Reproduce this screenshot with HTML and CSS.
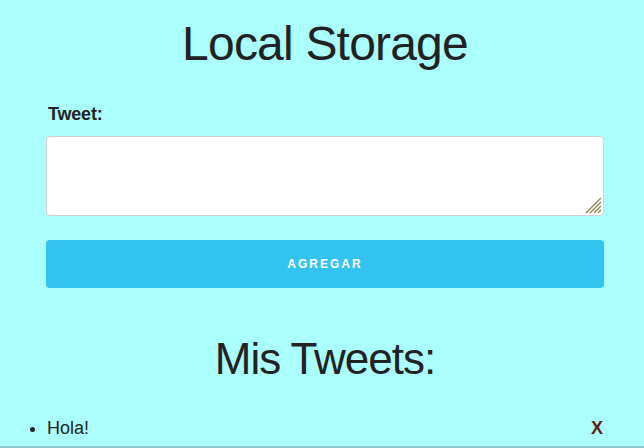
FILE: index.html
```html
<!DOCTYPE html>
<html lang="es">
<head>
<meta charset="utf-8">
<title>Local Storage</title>
<link rel="stylesheet" href="styles.css">
</head>
<body>
<div class="container">
  <h1 class="title">Local Storage</h1>
  <form class="form">
    <label class="label" for="tweet">Tweet:</label>
    <div class="field-wrap">
      <textarea id="tweet" class="field"></textarea>
      <svg class="grip" width="18" height="18" viewBox="0 0 18 18" aria-hidden="true">
        <path d="M2 17L17 2M6 17L17 6M10 17L17 10M14 17L17 14" stroke="#8c7e4c" stroke-width="1.2" fill="none"/>
      </svg>
    </div>
    <button type="button" class="button">Agregar</button>
  </form>
  <h2 class="subtitle">Mis Tweets:</h2>
  <ul class="list">
    <li class="item"><span class="item-text">Hola!</span><a class="remove">X</a></li>
  </ul>
</div>
<div class="rule"></div>
</body>
</html>
```

FILE: styles.css
```css
html, body {
  margin: 0;
  padding: 0;
  height: 100%;
}
body {
  background: #abfefe;
  color: #222;
  font-family: "Liberation Sans", Arial, sans-serif;
  overflow: hidden;
  display: flex;
  flex-direction: column;
}
.container {
  padding: 15px 40px 0 46px;
  display: flex;
  flex-direction: column;
  flex: 1;
}
.title {
  margin: 0;
  font-size: 48px;
  font-weight: 400;
  line-height: 1.2;
  letter-spacing: -0.8px;
  text-align: center;
}
.form {
  margin-top: 31px;
  display: flex;
  flex-direction: column;
}
.label {
  font-size: 18px;
  font-weight: 700;
  line-height: 1.2;
  letter-spacing: -0.2px;
  margin-left: 2px;
}
.field-wrap {
  position: relative;
  margin-top: 11px;
  display: flex;
}
.field {
  box-sizing: border-box;
  flex: 1;
  height: 80px;
  margin: 0;
  border: 1px solid #d1d1d1;
  border-radius: 4px;
  background: #fff;
  padding: 6px 10px;
  font-family: inherit;
  font-size: 15px;
  resize: none;
}
.grip {
  position: absolute;
  right: 2px;
  bottom: 2px;
  pointer-events: none;
}
.button {
  margin-top: 24px;
  height: 48px;
  border: 0;
  border-radius: 4px;
  background: #33c3f0;
  color: #fff;
  font-family: inherit;
  font-size: 12px;
  font-weight: 700;
  letter-spacing: 2px;
  text-transform: uppercase;
}
.subtitle {
  margin: 45px 0 0;
  font-size: 44px;
  font-weight: 400;
  line-height: 1.2;
  letter-spacing: -1px;
  text-align: center;
}
.list {
  margin: 32px 0 0;
  padding-left: 1px;
  list-style: none;
}
.item {
  display: flex;
  justify-content: space-between;
  align-items: baseline;
  font-size: 18px;
  line-height: 1.2;
}
.item-text {
  display: list-item;
  list-style: disc outside;
}
.remove {
  font-weight: 700;
  color: #5c1e0e;
  margin-right: 1px;
}
.rule {
  height: 2px;
  background: #8cc8c8;
}
```
